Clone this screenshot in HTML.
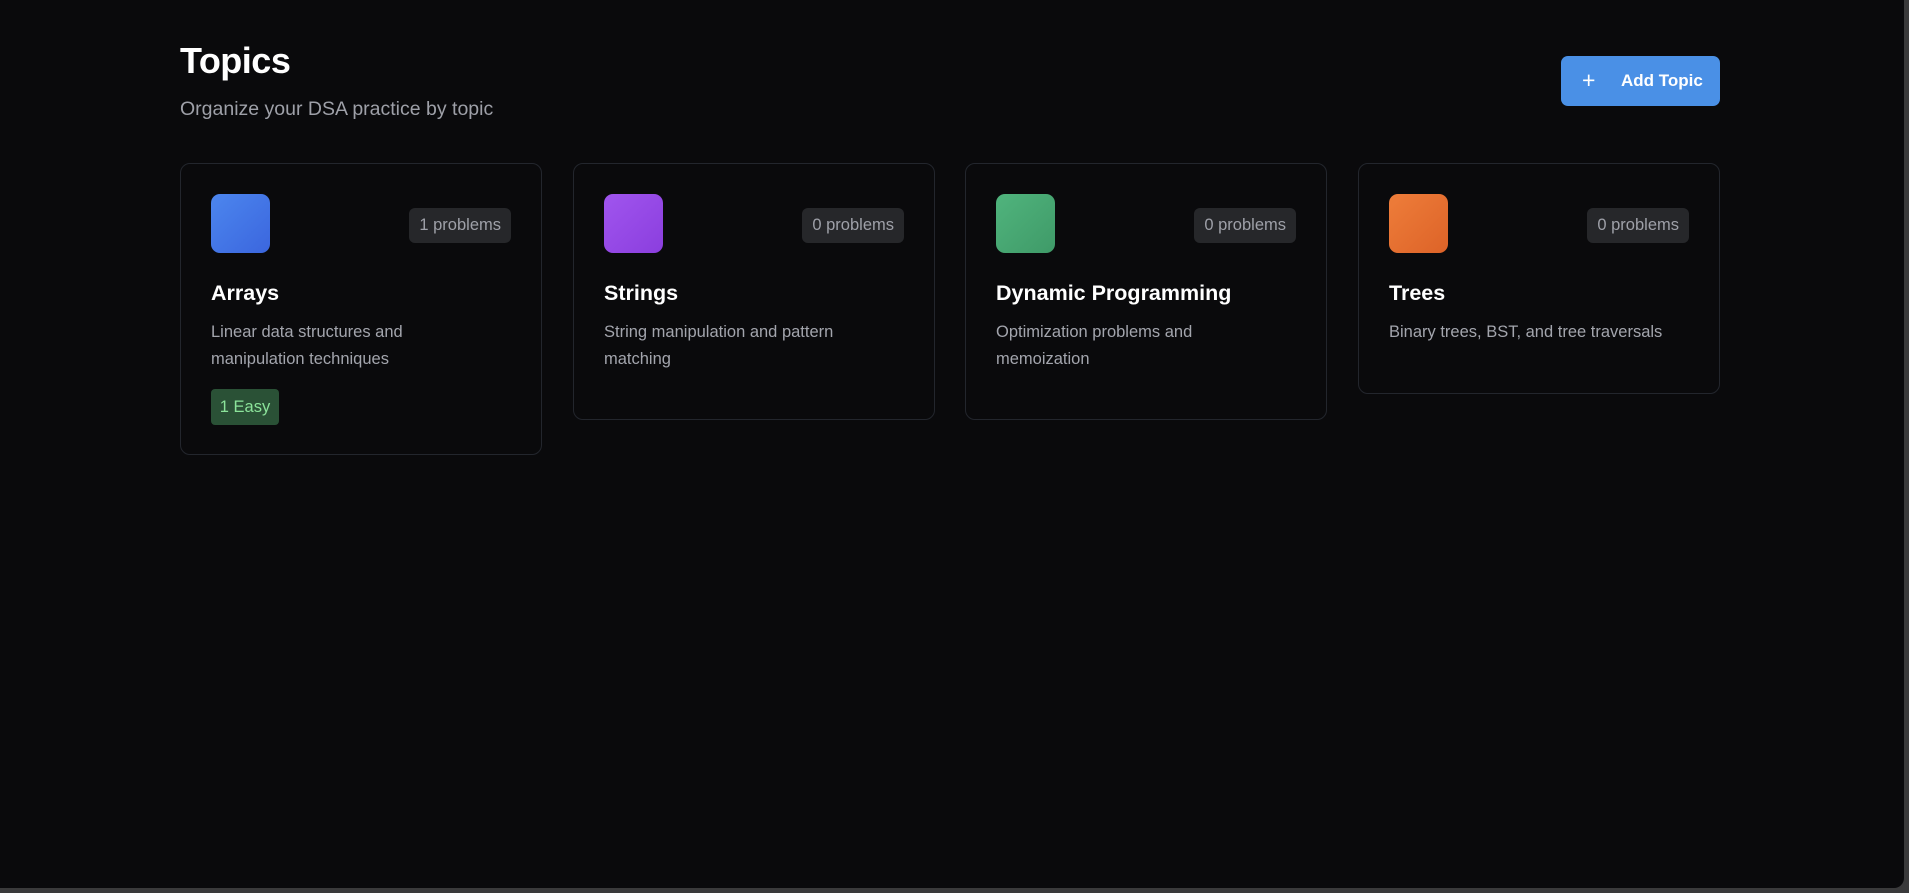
<!DOCTYPE html>
<html><head><meta charset="utf-8"><style>
*{margin:0;padding:0;box-sizing:border-box}
html,body{width:1909px;height:893px;background:#3a3a3b;overflow:hidden;font-family:"Liberation Sans",sans-serif}
.main{position:absolute;left:0;top:0;width:1904px;height:888px;background:#0a0a0c;border-bottom-right-radius:10px}
h1{position:absolute;left:180px;top:40px;font-size:36px;font-weight:bold;color:#fff;letter-spacing:-0.5px}
.sub{position:absolute;left:180px;top:98px;font-size:19.5px;color:#9ea0a8}
.btn{position:absolute;left:1561px;top:56px;width:159px;height:50px;background:#4a90e6;border-radius:7px;color:#fff;font-weight:bold;font-size:17px}
.btn .plus{position:absolute;left:21px;top:11px;font-size:23px;font-weight:normal;line-height:26px}
.btn .t{position:absolute;left:60px;top:15px}
.card{position:absolute;top:163px;width:362px;border:1px solid #23262d;border-radius:10px;background:#0a0a0c}
.ic{position:absolute;left:30px;top:30px;width:59px;height:59px;border-radius:9px}
.badge{position:absolute;right:30px;top:44px;height:35px;padding:0 10px;background:#26272a;border-radius:6px;color:#9ea0a8;font-size:16.5px;line-height:35px}
.title{position:absolute;left:30px;top:117px;color:#fff;font-size:21.5px;font-weight:bold}
.desc{position:absolute;left:30px;top:155px;width:283px;color:#a3a5ad;font-size:16.5px;line-height:27px}
.easy{position:absolute;left:30px;top:225px;width:68px;height:36px;background:#2a5136;border-radius:4px;color:#8be39a;font-size:16.5px;line-height:36px;text-align:center}
</style></head><body>
<div class="main">
<h1>Topics</h1>
<div class="sub">Organize your DSA practice by topic</div>
<div class="btn"><span class="plus">+</span><span class="t">Add Topic</span></div>

<div class="card" style="left:180px;height:292px">
<div class="ic" style="background:linear-gradient(135deg,#4c86ee,#3b66de)"></div>
<div class="badge">1 problems</div>
<div class="title">Arrays</div>
<div class="desc">Linear data structures and manipulation techniques</div>
<div class="easy">1 Easy</div>
</div>

<div class="card" style="left:573px;height:257px">
<div class="ic" style="background:linear-gradient(135deg,#a055ee,#8b3ede)"></div>
<div class="badge">0 problems</div>
<div class="title">Strings</div>
<div class="desc">String manipulation and pattern matching</div>
</div>

<div class="card" style="left:965px;height:257px">
<div class="ic" style="background:linear-gradient(135deg,#50b47d,#3f9a68)"></div>
<div class="badge">0 problems</div>
<div class="title">Dynamic Programming</div>
<div class="desc">Optimization problems and memoization</div>
</div>

<div class="card" style="left:1358px;height:231px">
<div class="ic" style="background:linear-gradient(135deg,#ee7d3a,#dd6328)"></div>
<div class="badge">0 problems</div>
<div class="title">Trees</div>
<div class="desc">Binary trees, BST, and tree traversals</div>
</div>
</div>
</body></html>
